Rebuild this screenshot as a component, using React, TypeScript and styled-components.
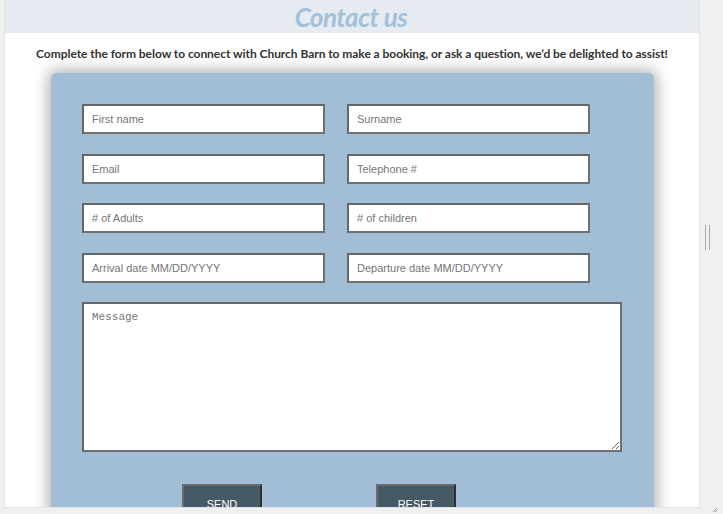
import React from "react";
import styled, { createGlobalStyle } from "styled-components";

const Global = createGlobalStyle`
  html, body { margin: 0; padding: 0; background: #f0f0f0; overflow: hidden; }
  * { box-sizing: border-box; }
`;

const Shell = styled.div`
  display: flex;
  width: 723px;
  height: 514px;
  background: #f0f0f0;
  padding-left: 4px;
  position: relative;
`;

const Panel = styled.div`
  width: 696px;
  height: 508px;
  background: #ffffff;
  border-right: 1px solid #dde3ea;
  border-bottom: 1px solid #dde3ea;
  border-left: 1px solid #e4e4e4;
  overflow: hidden;
  display: flex;
  flex-direction: column;
`;

const Header = styled.div`
  height: 39px;
  background: #e6ebf2;
  display: flex;
  align-items: center;
  justify-content: center;
  padding-top: 1px;
`;

const Title = styled.h1`
  margin: 0;
  font-family: Lato, "Open Sans", sans-serif;
  font-style: italic;
  font-weight: 700;
  font-size: 26px;
  letter-spacing: -0.5px;
  color: #a3c0da;
  padding-right: 2px;
`;

const Intro = styled.p`
  margin: 13px 0 0;
  text-align: center;
  font-family: Lato, "Open Sans", sans-serif;
  font-weight: 700;
  font-size: 12px;
  letter-spacing: -0.05px;
  color: #333333;
`;

const Card = styled.form`
  margin: 12px 0 0 46px;
  width: 603px;
  flex: 1 0 auto;
  min-height: 520px;
  background: #a2bdd6;
  border-radius: 6px;
  box-shadow: 0 0 14px 4px rgba(0, 0, 0, 0.28);
  padding: 31px 31px 0 31px;
  display: flex;
  flex-direction: column;
`;

const Grid = styled.div`
  display: grid;
  grid-template-columns: 243px 243px;
  column-gap: 22px;
  row-gap: 19.5px;
`;

const Field = styled.input`
  width: 243px;
  height: 30px;
  border: 2px solid #707070;
  border-top-color: #666;
  border-left-color: #666;
  background: #ffffff;
  padding: 0 8px;
  font-family: Arial, "Liberation Sans", sans-serif;
  font-size: 11px;
  color: #333;
  outline: none;
  &::placeholder { color: #767676; }
`;

const Message = styled.textarea`
  margin-top: 19px;
  width: 540px;
  height: 150px;
  border: 2px solid #707070;
  border-top-color: #666;
  border-left-color: #666;
  background: #fff;
  padding: 7px 8px;
  font-family: "Liberation Mono", "DejaVu Sans Mono", monospace;
  font-size: 11px;
  resize: both;
  outline: none;
  &::placeholder { color: #767676; }
`;

const Buttons = styled.div`
  display: flex;
  margin-top: 32px;
  padding-left: 100px;
  gap: 114px;
`;

const Btn = styled.button`
  width: 80px;
  height: 36px;
  background: #455a64;
  border: 2px solid #6b6b6b;
  border-right-color: #2e2e2e;
  border-bottom-color: #2e2e2e;
  color: #ffffff;
  font-family: Arial, "Liberation Sans", sans-serif;
  font-size: 11px;
  padding-top: 6px;
`;

const Side = styled.div`
  flex: 1;
  display: flex;
  justify-content: center;
  padding-top: 225px;
`;

const Grip = styled.div`
  width: 5px;
  height: 25px;
  border-left: 1px solid #a8a8a8;
  border-right: 1px solid #a8a8a8;
  margin-left: -8px;
`;

const Corner = styled.svg`
  position: absolute;
  right: 5px;
  bottom: 1px;
`;

export default function App() {
  return (
    <>
      <Global />
      <Shell>
        <Panel>
          <Header>
            <Title>Contact us</Title>
          </Header>
          <Intro>
            Complete the form below to connect with Church Barn to make a booking, or ask a question, we’d be delighted to assist!
          </Intro>
          <Card onSubmit={(e) => e.preventDefault()}>
            <Grid>
              <Field placeholder="First name" />
              <Field placeholder="Surname" />
              <Field placeholder="Email" />
              <Field placeholder="Telephone #" />
              <Field placeholder="# of Adults" />
              <Field placeholder="# of children" />
              <Field placeholder="Arrival date MM/DD/YYYY" />
              <Field placeholder="Departure date MM/DD/YYYY" />
            </Grid>
            <Message placeholder="Message" />
            <Buttons>
              <Btn type="submit">SEND</Btn>
              <Btn type="reset">RESET</Btn>
            </Buttons>
          </Card>
        </Panel>
        <Side>
          <Grip />
        </Side>
        <Corner width="6" height="6" viewBox="0 0 6 6">
          <path d="M5 1 L1 5 M5 3 L3 5" stroke="#999" strokeWidth="1" />
        </Corner>
      </Shell>
    </>
  );
}
